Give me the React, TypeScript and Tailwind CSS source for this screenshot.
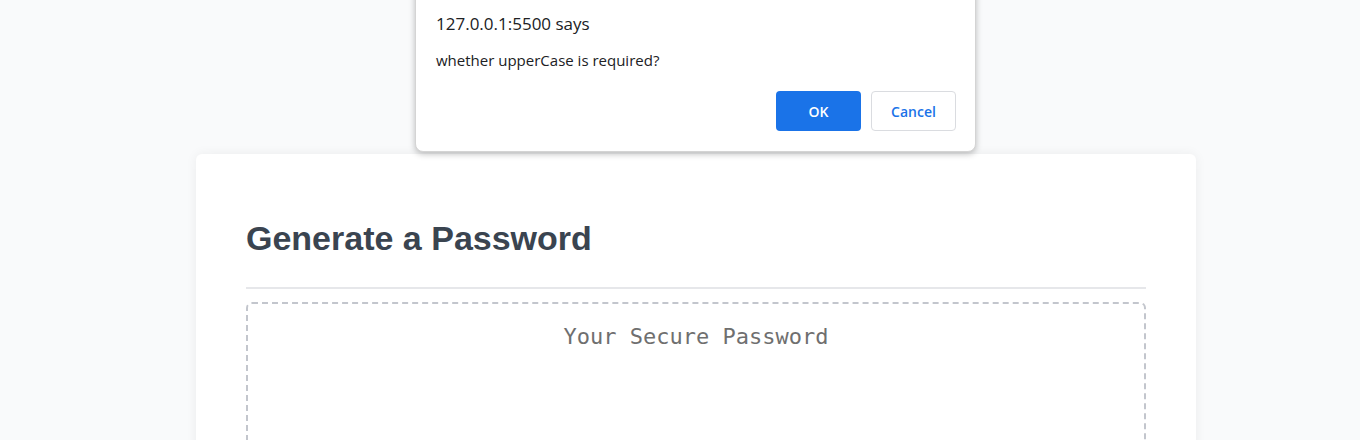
export default function App() {
  return (
    <div className="relative min-h-[440px] bg-[#f9fafb] overflow-hidden" style={{ fontFamily: '"Liberation Sans", Arial, sans-serif' }}>
      {/* card */}
      <div className="pt-[154px] pl-[32px] flex justify-center">
        <div className="w-[1000px] bg-white rounded-[6px] shadow-[0_0_12px_rgba(0,0,0,0.06)] px-[50px] pt-[64px] pb-10">
          <h1 className="text-[34px] font-bold text-[#3a4450] leading-[40px] pb-[29px] border-b-2 border-[#e6e7ea]">
            Generate a Password
          </h1>
          <div className="mt-[13px] h-[200px] border-2 border-dashed border-[#c3c6cd] rounded-[6px] pt-[16px] text-center">
            <span className="text-[22px] text-[#6f6f6f]" style={{ fontFamily: '"DejaVu Sans Mono", "Liberation Mono", monospace' }}>
              Your Secure Password
            </span>
          </div>
        </div>
      </div>

      {/* browser alert */}
      <div
        className="absolute left-[415px] top-[-10px] w-[561px] bg-white rounded-b-[8px] border border-[#d4d4d4] shadow-[0_2px_6px_rgba(0,0,0,0.25)] pt-[20px] pb-[20px] pl-[20px] pr-[19px]"
        style={{ fontFamily: '"Open Sans", "Noto Sans", sans-serif' }}
      >
        <div className="text-[17px] text-[#202124] leading-[24px] mt-[1px]">127.0.0.1:5500 says</div>
        <div className="text-[15px] text-[#202124] leading-[20px] mt-[14px]">whether upperCase is required?</div>
        <div className="flex justify-end gap-[10px] mt-[21px]">
          <button className="w-[85px] h-[40px] rounded-[4px] bg-[#1a73e8] text-white text-[14px] font-semibold">OK</button>
          <button className="w-[85px] h-[40px] rounded-[4px] bg-white border border-[#dadce0] text-[#1a73e8] text-[14px] font-semibold">Cancel</button>
        </div>
      </div>
    </div>
  )
}
